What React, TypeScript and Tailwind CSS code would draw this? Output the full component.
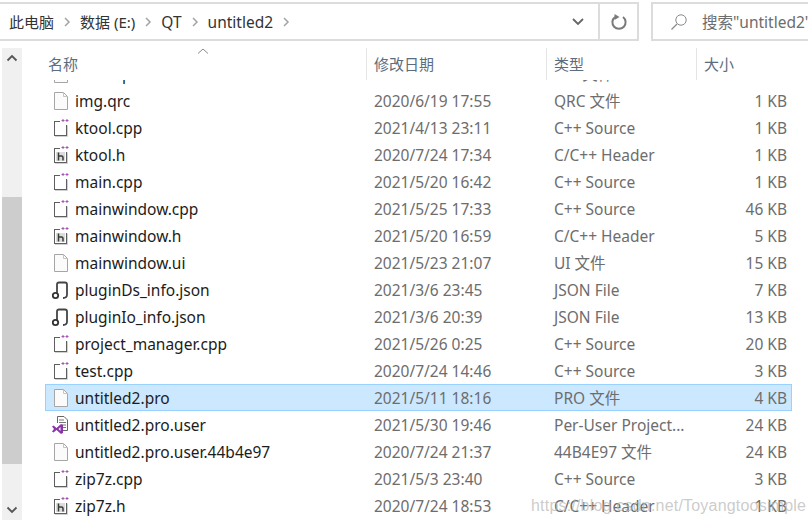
const font = "font-['Noto_Sans','Noto_Sans_CJK_SC',sans-serif]";

type Kind = "plain" | "cpp" | "h" | "json" | "vs";

const files: { name: string; date: string; type: string; size: string; kind: Kind }[] = [
  { name: "img.qrc", date: "2020/6/19 17:55", type: "QRC 文件", size: "1 KB", kind: "plain" },
  { name: "ktool.cpp", date: "2021/4/13 23:11", type: "C++ Source", size: "1 KB", kind: "cpp" },
  { name: "ktool.h", date: "2020/7/24 17:34", type: "C/C++ Header", size: "1 KB", kind: "h" },
  { name: "main.cpp", date: "2021/5/20 16:42", type: "C++ Source", size: "1 KB", kind: "cpp" },
  { name: "mainwindow.cpp", date: "2021/5/25 17:33", type: "C++ Source", size: "46 KB", kind: "cpp" },
  { name: "mainwindow.h", date: "2021/5/20 16:59", type: "C/C++ Header", size: "5 KB", kind: "h" },
  { name: "mainwindow.ui", date: "2021/5/23 21:07", type: "UI 文件", size: "15 KB", kind: "plain" },
  { name: "pluginDs_info.json", date: "2021/3/6 23:45", type: "JSON File", size: "7 KB", kind: "json" },
  { name: "pluginIo_info.json", date: "2021/3/6 20:39", type: "JSON File", size: "13 KB", kind: "json" },
  { name: "project_manager.cpp", date: "2021/5/26 0:25", type: "C++ Source", size: "20 KB", kind: "cpp" },
  { name: "test.cpp", date: "2020/7/24 14:46", type: "C++ Source", size: "3 KB", kind: "cpp" },
  { name: "untitled2.pro", date: "2021/5/11 18:16", type: "PRO 文件", size: "4 KB", kind: "plain" },
  { name: "untitled2.pro.user", date: "2021/5/30 19:46", type: "Per-User Project...", size: "24 KB", kind: "vs" },
  { name: "untitled2.pro.user.44b4e97", date: "2020/7/24 21:37", type: "44B4E97 文件", size: "24 KB", kind: "plain" },
  { name: "zip7z.cpp", date: "2021/5/3 23:40", type: "C++ Source", size: "3 KB", kind: "cpp" },
  { name: "zip7z.h", date: "2020/7/24 18:53", type: "C/C++ Header", size: "1 KB", kind: "h" },
];

const FileIcon = ({ kind }: { kind: Kind }) => {
  if (kind === "plain") {
    return (
      <svg width="16" height="20" viewBox="0 0 16 20" className="shrink-0">
        <path d="M1.5 1.5H10.5L14.5 5.5V18.5H1.5Z" fill="#fbfbfb" stroke="#a6a6a6" />
        <path d="M10.5 1.5V5.5H14.5" fill="none" stroke="#c4c4c4" />
      </svg>
    );
  }
  if (kind === "cpp" || kind === "h") {
    return (
      <svg width="17" height="20" viewBox="0 0 17 20" className="shrink-0">
        <path d="M1 3H7V4H2V17H13V7H14V18H1Z" fill="#5f5f5f" />
        <path d="M2 18.5H14.5V7.5" fill="none" stroke="#d0d0d0" />
        <path d="M9.5 1H10.5V2H11.5V3H10.5V4H9.5V3H8.5V2H9.5Z" fill="#a855b5" />
        <path d="M13.5 1H14.5V2H15.5V3H14.5V4H13.5V3H12.5V2H13.5Z" fill="#a855b5" />
        {kind === "h" && (
          <>
            <rect x="3" y="7" width="9" height="9" fill="#dcdcdc" />
            <path d="M5.5 7.5V15.5M5.5 11H8.5Q10 11 10 12.5V15.5" fill="none" stroke="#3a3a3a" strokeWidth="1.5" />
          </>
        )}
      </svg>
    );
  }
  if (kind === "json") {
    return (
      <svg width="18" height="20" viewBox="0 0 18 20" className="shrink-0 -ml-[2px]">
        <path d="M6 13V4.5Q6 2.5 8 2.5H14Q16 2.5 16 4.5V14.5Q16 18 12 18" fill="#fff" stroke="#454545" strokeWidth="1.8" />
        <circle cx="4.5" cy="15.5" r="2.7" fill="#fff" stroke="#333" strokeWidth="1.8" />
      </svg>
    );
  }
  return (
    <svg width="18" height="20" viewBox="0 0 18 20" className="shrink-0 -ml-[2px]">
      <path d="M6.5 8V1.5H13L16.5 5V15.5H12" fill="#fff" stroke="#666" />
      <path d="M8 5h5M8 7.5h7M11 10h4M12 12.5h3" stroke="#777" />
      <path d="M1 11.5L2.5 10.5L5.5 13L10 9L12 10V18L10 19L5.5 15L2.5 17.5L1 16.5L3 14Z" fill="#8a34a8" />
      <path d="M9.5 12L7.5 14L9.5 16Z" fill="#fff" />
    </svg>
  );
};

const Crumb = () => (
  <svg width="8" height="10" viewBox="0 0 8 10" className="shrink-0">
    <path d="M2 1L6 5L2 9" fill="none" stroke="#a3a3a3" strokeWidth="1.5" />
  </svg>
);

const Row = ({ file }: { file: (typeof files)[number] }) => {
  const selected = file.name === "untitled2.pro";
  return (
    <div
      className={`grid h-[27px] grid-cols-[22px_299px_180px_150px_83px] items-center whitespace-nowrap border pl-[7px] pr-[4px] ${
        selected ? "border-[#99d1ff] bg-[#cce8ff]" : "border-transparent"
      }`}
    >
      <FileIcon kind={file.kind} />
      <span className="truncate text-[#1c1c1c]">{file.name}</span>
      <span className="text-[#6d6d6d]">{file.date}</span>
      <span className="text-[#6d6d6d]">{file.type}</span>
      <span className="text-right text-[#6d6d6d]">{file.size}</span>
    </div>
  );
};

export default function App() {
  return (
    <div className={`relative h-[523px] w-[808px] overflow-hidden bg-white text-[15.5px] leading-5 ${font}`}>
      <div className="flex h-[41px] gap-[12px] pt-[2px]">
        <div className="flex w-[639px] items-center border-y-2 border-r-2 border-[#dcdcdc] text-[#333]">
          <div className="flex flex-1 items-center gap-[9px] pl-[9px]">
            <span className="text-[15px]">此电脑</span>
            <Crumb />
            <span className="text-[15px]">数据 (E:)</span>
            <Crumb />
            <span>QT</span>
            <Crumb />
            <span>untitled2</span>
            <Crumb />
          </div>
          <svg width="14" height="10" viewBox="0 0 14 10" className="mr-[13px]">
            <path d="M2 2L7 7L12 2" fill="none" stroke="#666" strokeWidth="1.8" />
          </svg>
          <div className="flex h-full w-[39px] items-center justify-center border-l-2 border-[#dcdcdc]">
            <svg width="18" height="18" viewBox="0 0 18 18">
              <path d="M5 4A6.6 6.6 0 1 0 13 4" fill="none" stroke="#7a7a7a" strokeWidth="2" />
              <path d="M8.5 1V7L3.5 4Z" fill="#7a7a7a" transform="rotate(180 7.5 4) translate(2 0)" />
            </svg>
          </div>
        </div>
        <div className="flex flex-1 items-center gap-[14px] overflow-hidden whitespace-nowrap border-y-2 border-l-2 border-[#dcdcdc] pl-[17px] text-[#6d6d6d]">
          <svg width="18" height="18" viewBox="0 0 18 18" className="shrink-0">
            <circle cx="11" cy="7" r="5.2" fill="none" stroke="#8a8a8a" />
            <path d="M7 11L1.5 16.5" stroke="#8a8a8a" strokeWidth="1.2" />
          </svg>
          <span>搜索"untitled2"</span>
        </div>
      </div>

      <div className="mt-[7px] flex h-[472px]">
        <div className="ml-[2px] flex w-[20px] flex-col bg-[#f0f0f0]">
          <div className="flex h-[20px] items-center justify-center">
            <svg width="12" height="8" viewBox="0 0 12 8">
              <path d="M1.5 6.5L6 2L10.5 6.5" fill="none" stroke="#555" strokeWidth="1.8" />
            </svg>
          </div>
          <div className="mt-[129px] h-[267px] bg-[#cdcdcd]" />
          <div className="mt-auto flex h-[20px] items-center justify-center">
            <svg width="12" height="8" viewBox="0 0 12 8">
              <path d="M1.5 1.5L6 6L10.5 1.5" fill="none" stroke="#555" strokeWidth="1.8" />
            </svg>
          </div>
        </div>

        <div className="ml-[23px] w-[747px]">
          <div className="relative grid h-[32px] grid-cols-[321px_180px_150px_100px] items-center text-[15px] text-[#5b6d80]">
            <span className="pl-[3px]">名称</span>
            <span className="h-full border-l border-[#e5e5e5] pl-[7px] leading-8">修改日期</span>
            <span className="h-full border-l border-[#e5e5e5] pl-[7px] leading-8">类型</span>
            <span className="h-full border-l border-[#e5e5e5] pl-[7px] leading-8">大小</span>
            <svg width="12" height="6" viewBox="0 0 12 6" className="absolute left-[152px] top-0">
              <path d="M1 5.5L6 1L11 5.5" fill="none" stroke="#8a8a8a" />
            </svg>
          </div>
          <div className="h-[440px] overflow-hidden">
            <div className="-mt-[20px]">
              <Row file={{ name: "about.pri", date: "2020/6/19 17:55", type: "PRI 文件", size: "", kind: "plain" }} />
              {files.map((file) => (
                <Row key={file.name} file={file} />
              ))}
            </div>
          </div>
        </div>
      </div>

      <span className="pointer-events-none absolute left-[531px] top-[496px] font-['Liberation_Sans',sans-serif] text-[16px] tracking-[0.2px] text-[#b5b5b5]/70">
        https://blog.csdn.net/Toyangtoosimple
      </span>
    </div>
  );
}
